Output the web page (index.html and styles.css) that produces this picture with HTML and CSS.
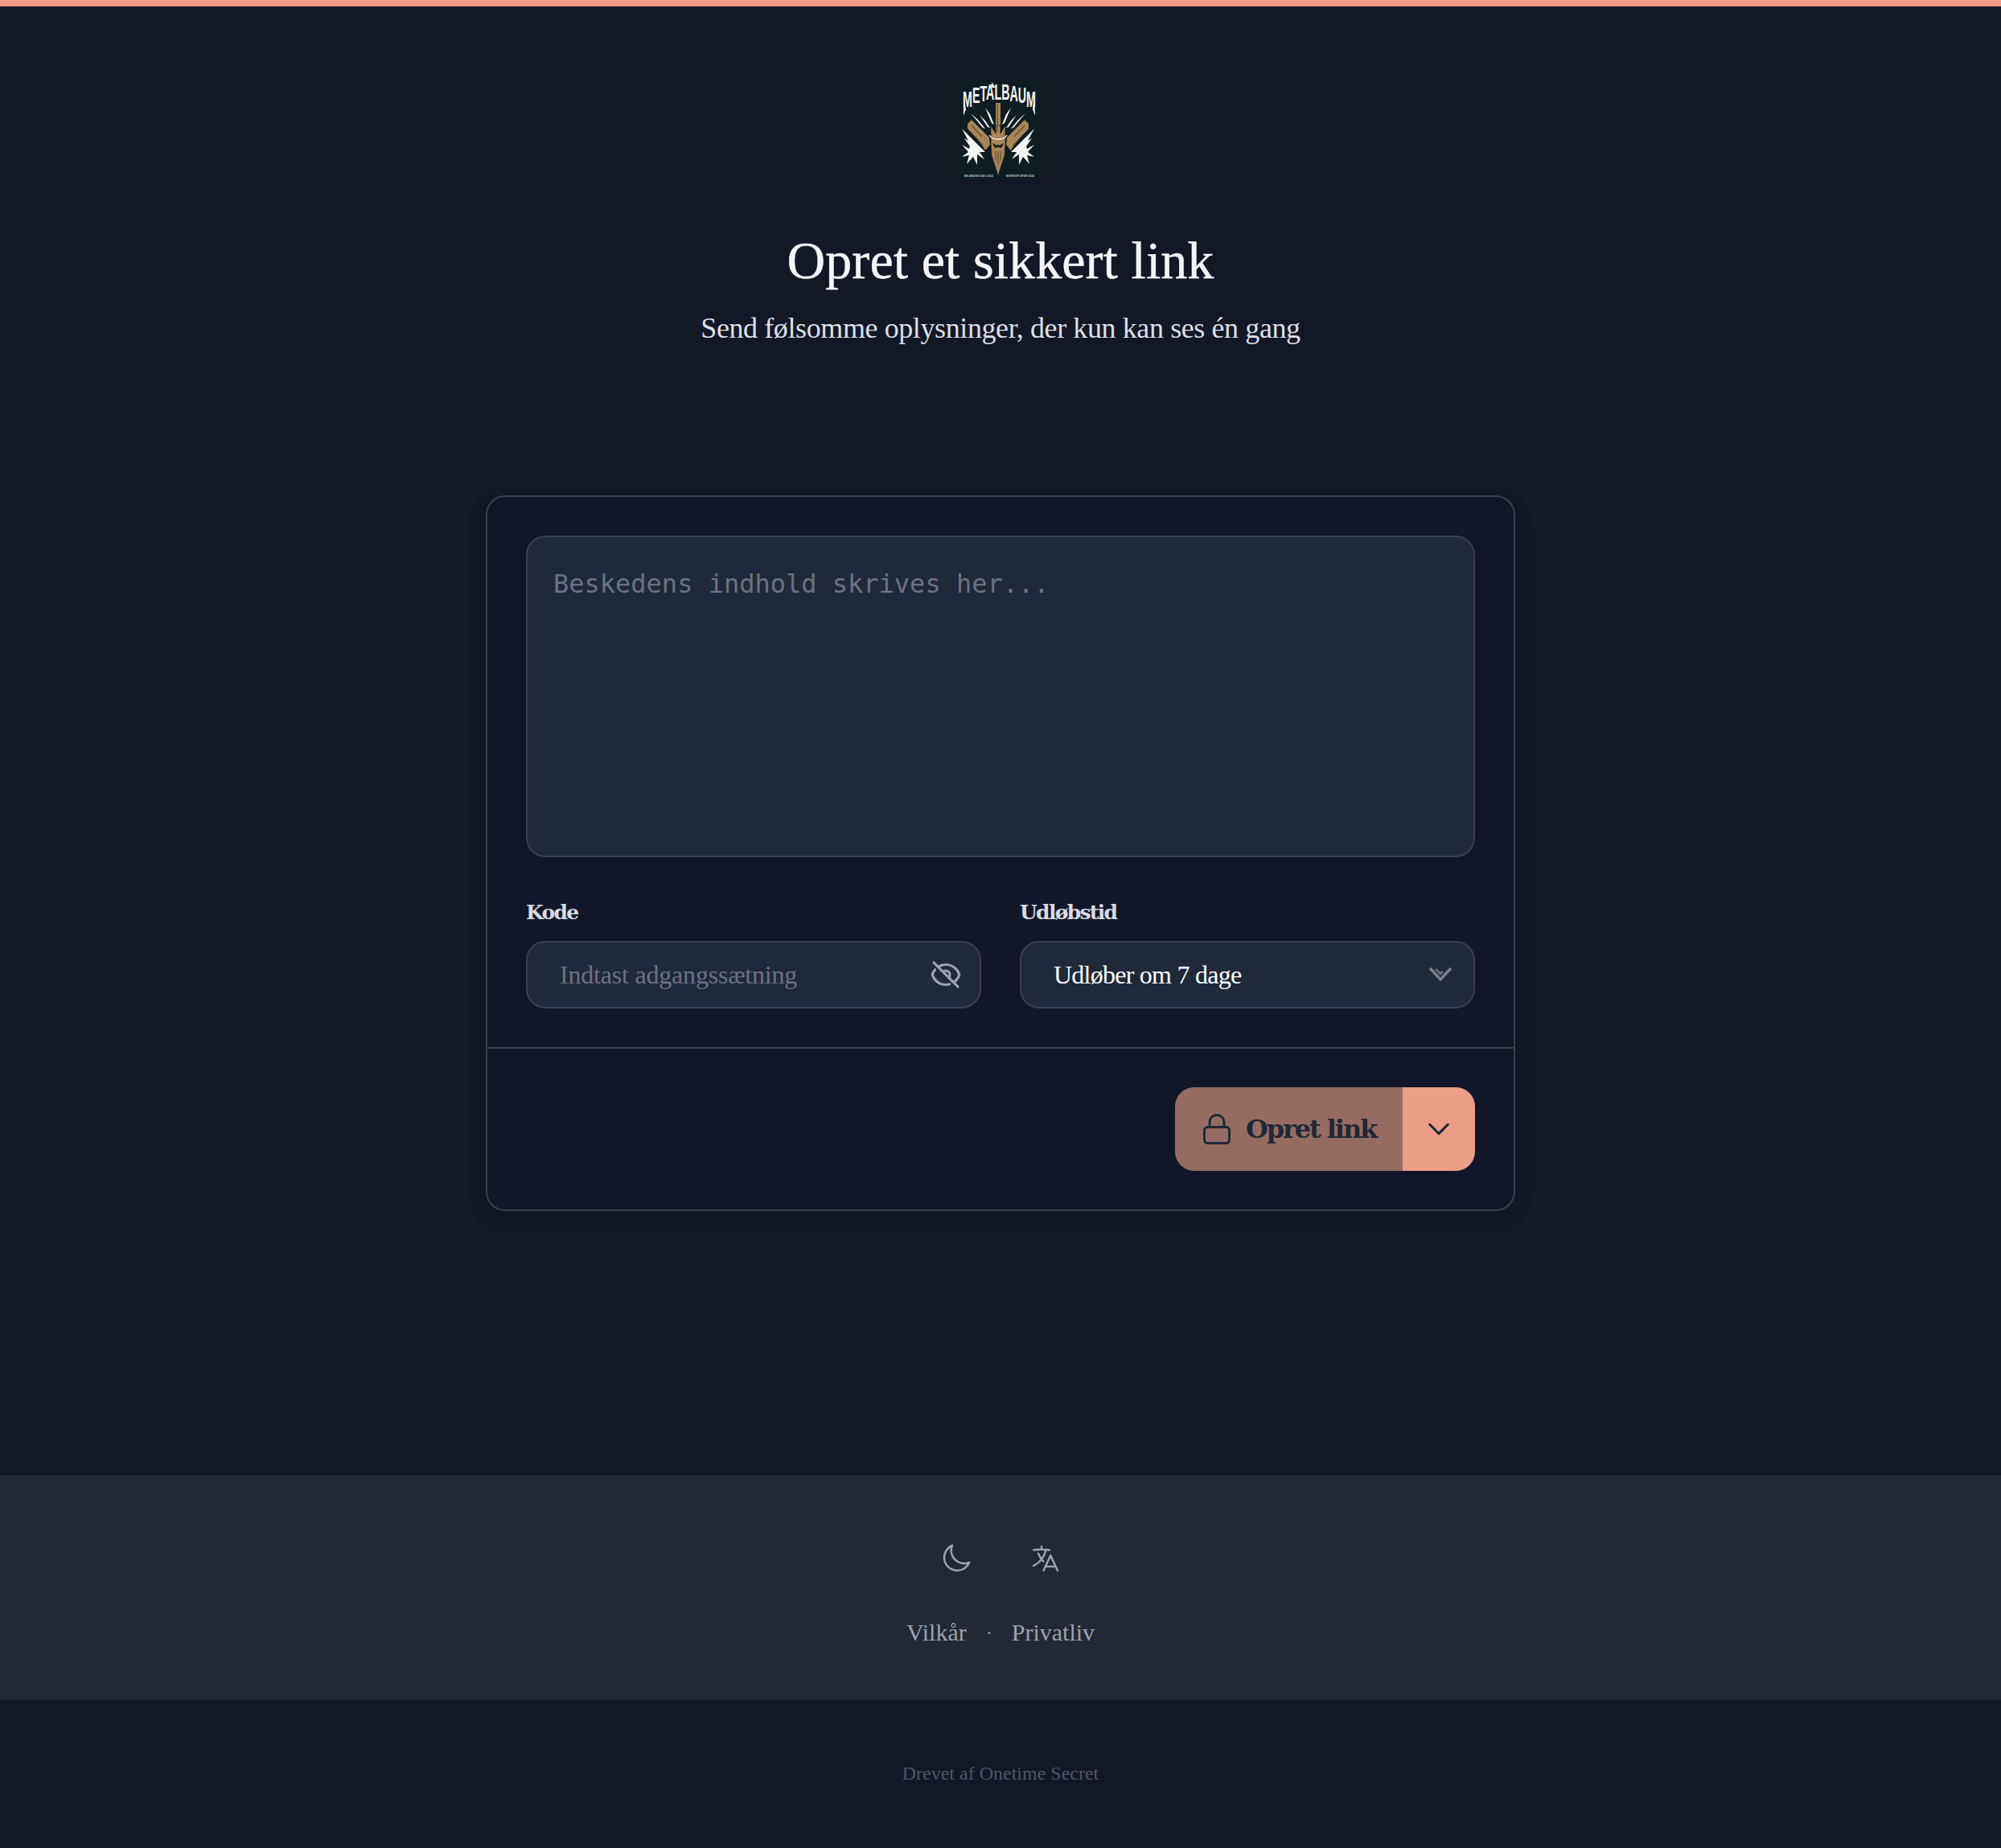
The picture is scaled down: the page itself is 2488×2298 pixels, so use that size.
FILE: index.html
```html
<!DOCTYPE html>
<html lang="da">
<head>
<meta charset="utf-8">
<title>Opret et sikkert link</title>
<link rel="stylesheet" href="styles.css">
</head>
<body>
<main class="main">
  <header class="hero">
    <svg class="logo" viewBox="0 0 128 128" role="img" aria-label="Metalbaum">
      <defs>
        <g id="side">
          <g fill="#f4f5f5">
            <path d="M45 38l6 8 5 13-3-2zM38 47l7 7 6 9-3-1zM27 45l9 8 9 11-3-1z"/>
            <path d="M16 64l15 15 14 14-7 0 6 9-9-6 0 13-5-10-8 9 3-11-9 2 8-6-8-9 9 5 1-3-7-10 5 3z"/>
          </g>
          <path d="M23 58l5-5 22 22 1 9-6 7-5-9-17-18z" fill="#a98457"/>
          <path d="M28 60l13 14M36 78l6 7" stroke="#5f4d36" stroke-width="1.2" fill="none"/>
        </g>
      </defs>
      <rect width="128" height="128" rx="18" fill="#0f1c22"/>
      <text class="logo-word" transform="translate(17 0) scale(1 1.9)" y="14.5" dy="5 -2.5 -1 -1 -.5 .5 1 1 2.5" textLength="91" lengthAdjust="spacingAndGlyphs">METALBAUM</text>
      <path d="M18 24l0 24 3-8zM106 20l1 28-3-8zM53 6l5 7-5 0z" fill="#f4f5f5"/>
      <use href="#side"/>
      <use href="#side" transform="translate(122 0) scale(-1 1)"/>
      <path d="M58 32h6v28h-6z" fill="#a98457"/>
      <path d="M52 60l6 10V60h6v10l6-10v24l-1 14-4 12-4 13-4-13-4-12-1-14z" fill="#a98457" stroke="#0f1c22" stroke-width=".8"/>
      <path d="M50 72c4 7 18 7 22 0" stroke="#f4f5f5" stroke-width="1.3" fill="none"/>
      <path d="M54 82l6 3 1-2 1 2 6-3-3 6-4-1-4 1z" fill="#1c1d1c"/>
      <path d="M60 34v34M58 92v12M61 92v16M64 92v12" stroke="#5f4d36" stroke-width="1.2" fill="none"/>
      <g class="logo-small">
        <text x="19" y="124" textLength="36" lengthAdjust="spacingAndGlyphs">EN ANDEN DAG 2022</text>
        <text x="71" y="124" textLength="35" lengthAdjust="spacingAndGlyphs">MORMOR SPAR 2022</text>
      </g>
    </svg>
    <h1 class="title">Opret et sikkert link</h1>
    <p class="subtitle">Send følsomme oplysninger, der kun kan ses én gang</p>
  </header>

  <form class="card">
    <div class="card-body">
      <textarea class="message" placeholder="Beskedens indhold skrives her..."></textarea>
      <div class="fields">
        <div class="field">
          <label class="label" for="code">Kode</label>
          <div class="control">
            <input class="input input-code" id="code" type="text" placeholder="Indtast adgangssætning">
            <svg class="eye" viewBox="0 0 24 24" fill="none" stroke="currentColor" stroke-width="1.9" stroke-linecap="round" stroke-linejoin="round"><path d="M3.98 8.223A10.477 10.477 0 0 0 1.934 12C3.226 16.338 7.244 19.5 12 19.5c.993 0 1.953-.138 2.863-.395M6.228 6.228A10.451 10.451 0 0 1 12 4.5c4.756 0 8.773 3.162 10.065 7.498a10.522 10.522 0 0 1-4.293 5.774M6.228 6.228 3 3m3.228 3.228 3.65 3.65m7.894 7.894L21 21m-3.228-3.228-3.65-3.65m0 0a3 3 0 1 0-4.243-4.243m4.242 4.242L9.88 9.88"/></svg>
          </div>
        </div>
        <div class="field">
          <label class="label" for="expiry">Udløbstid</label>
          <div class="control">
            <select class="input select" id="expiry"><option>Udløber om 7 dage</option></select>
            <svg class="arrows" viewBox="0 0 30 20" fill="none"><path d="M2 2l13 14L28 2" stroke="#7b808a" stroke-width="3.5"/><path d="M9 3l6 6 3-3" stroke="#6b717c" stroke-width="3"/></svg>
          </div>
        </div>
      </div>
    </div>
    <div class="card-foot">
      <div class="split">
        <button class="split-main" type="button">
          <svg class="lock" viewBox="0 0 34 38" fill="none" stroke="currentColor" stroke-width="3"><rect x="1.5" y="16.5" width="31" height="20" rx="4"/><path d="M8 16.5V10a9 8.5 0 0 1 18 0v6.5"/></svg>
          <span class="split-text">Opret link</span>
        </button>
        <button class="split-more" type="button" aria-label="Flere valg">
          <svg class="chev" viewBox="0 0 24 24" fill="none" stroke="currentColor" stroke-width="2" stroke-linecap="round" stroke-linejoin="round"><path d="m19.5 8.25-7.5 7.5-7.5-7.5"/></svg>
        </button>
      </div>
    </div>
  </form>
</main>

<footer class="band">
  <div class="tools">
    <svg class="tool" viewBox="0 0 24 24" fill="none" stroke="currentColor" stroke-width="1.5" stroke-linecap="round" stroke-linejoin="round"><path d="M21.752 15.002A9.72 9.72 0 0 1 18 15.75c-5.385 0-9.75-4.365-9.75-9.75 0-1.33.266-2.597.748-3.752A9.753 9.753 0 0 0 3 11.25C3 16.635 7.365 21 12.75 21a9.753 9.753 0 0 0 9.002-5.998Z"/></svg>
    <svg class="tool" viewBox="0 0 24 24" fill="none" stroke="currentColor" stroke-width="1.5" stroke-linecap="round" stroke-linejoin="round"><path d="m10.5 21 5.25-11.25L21 21m-9-3h7.5M3 5.621a48.474 48.474 0 0 1 6-.371m0 0c1.12 0 2.233.038 3.334.114M9 5.25V3m3.334 2.364C11.176 10.658 7.69 15.08 3 17.502m9.334-12.138c.896.061 1.785.147 2.666.257m-4.589 8.495a18.023 18.023 0 0 1-3.827-5.802"/></svg>
  </div>
  <nav class="links"><a class="link">Vilkår</a><span class="dot">·</span><a class="link">Privatliv</a></nav>
</footer>
<p class="powered">Drevet af Onetime Secret</p>
</body>
</html>
```
FILE: styles.css
```css
* { box-sizing: border-box; }
html, body { margin: 0; }
body {
  background: #121826;
  border-top: 8px solid #f09b82;
  font-family: "Liberation Serif", serif;
  color: #fff;
}
.main { display: flex; flex-direction: column; align-items: center; padding-top: 88px; }
.hero { display: flex; flex-direction: column; align-items: center; }
.logo { width: 128px; height: 128px; display: block; }
.logo-word { font: 700 15px "Liberation Sans", sans-serif; fill: #f4f5f5; }
.logo-small { font: 700 3px "Liberation Sans", sans-serif; fill: #b9c3c5; }
.title { margin: 64px 0 0; font-size: 66px; line-height: 72px; font-weight: 400; color: #f4f5f8; letter-spacing: 0.05px; -webkit-text-stroke: 0.4px #f4f5f8; }
.subtitle { margin: 24px 0 0; font-size: 36px; line-height: 48px; color: #dbdfe6; letter-spacing: -0.4px; }
.card {
  width: 1280px; margin-top: 184px;
  background: #111729;
  border: 2px solid #394150;
  border-radius: 24px;
  box-shadow: 0 8px 24px rgba(0,0,0,.12);
}
.card-body { padding: 48px 48px 48px; border-bottom: 2px solid #394150; }
.message {
  display: block; width: 100%; height: 400px; padding: 34px 32px 32px;
  background: #1f293a; border: 2px solid #374151; border-radius: 24px;
  font: 32px/48px "DejaVu Sans Mono", monospace; color: #fff; resize: none; outline: none;
}
.message::placeholder { color: #6b7280; opacity: 1; }
.fields { display: grid; grid-template-columns: 1fr 1fr; gap: 48px; margin-top: 48px; }
.label { display: block; font: 700 25px/42px "DejaVu Serif", serif; color: #d7dae2; margin-bottom: 14px; letter-spacing: -1.7px; }
.control { position: relative; }
.input {
  display: block; width: 100%; height: 84px; padding: 0 40px;
  background: #1f293a; border: 2px solid #374151; border-radius: 24px;
  font: 32px "Liberation Serif", serif; color: #fff; outline: none; appearance: none;
}
.input::placeholder { color: #6b7280; opacity: 1; }
.input-code { letter-spacing: -0.2px; }
.select { letter-spacing: -0.75px; }
.eye { position: absolute; right: 24px; top: 22px; width: 40px; height: 40px; color: #9ca3af; }
.arrows { position: absolute; right: 28px; top: 32px; width: 30px; height: 20px; }
.card-foot { display: flex; justify-content: flex-end; padding: 48px; }
.split { display: flex; height: 104px; border-radius: 24px; overflow: hidden; }
.split-main, .split-more { border: 0; padding: 0; display: flex; align-items: center; color: #1f2937; }
.split-main { width: 283px; gap: 19px; background: #966c62; padding: 0 0 0 35px; font: 700 32px "DejaVu Serif", serif; letter-spacing: -2.1px; }
.split-text { white-space: nowrap; }
.split-more { width: 90px; justify-content: center; background: #ec9d85; }
.lock { width: 34px; height: 38px; }
.chev { width: 36px; height: 36px; }
.band { margin-top: 328px; height: 280px; background: #222836; padding-top: 84px; display: flex; flex-direction: column; align-items: center; }
.tools { display: flex; gap: 71px; color: #9ca3af; }
.tool { width: 40px; height: 40px; display: block; }
.links { display: flex; align-items: center; margin-top: 52px; font-size: 30px; line-height: 40px; color: #9ca3af; }
.dot { margin: 0 24px; font-size: 24px; }
.powered { margin: 71px 0 0; text-align: center; font-size: 24px; line-height: 40px; color: #4b5563; }
```
